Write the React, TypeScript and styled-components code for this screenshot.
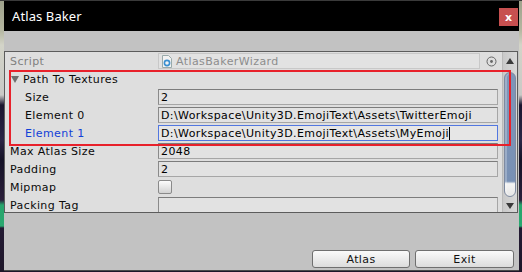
import React from "react";
import styled, { createGlobalStyle } from "styled-components";

const Global = createGlobalStyle`
  html, body { margin: 0; padding: 0; }
  body { width: 522px; height: 272px; overflow: hidden; background: #222; }
`;

const Desktop = styled.div`
  width: 522px;
  height: 272px;
  box-sizing: border-box;
  padding: 1px 3px 1px 4px;
  display: flex;
  background: linear-gradient(
    180deg,
    #3a3a3a 0px, #3a3a3a 1px,
    #9fa28c 1px, #b4b6a0 30px, #d3d4c8 45px, #c9c9c6 95px,
    #1a1630 105px, #2a2545 140px, #141226 160px, #2b1f3b 200px,
    #28a56c 205px, #2aa870 226px, #231a33 228px, #1d1629 272px
  );
  font-family: "DejaVu Sans", "Liberation Sans", sans-serif;
`;

const Window = styled.div`
  flex: 1;
  display: flex;
  flex-direction: column;
  min-width: 0;
`;

const TitleBar = styled.div`
  height: 30px;
  background: #000;
  display: flex;
  justify-content: space-between;
  align-items: flex-start;
`;

const Title = styled.span`
  color: #fff;
  font-family: "Noto Sans", "DejaVu Sans", sans-serif;
  font-size: 13px;
  line-height: 30px;
  padding-left: 8px;
  letter-spacing: 0.1px;
`;

const CloseButton = styled.div`
  width: 19px;
  height: 18px;
  margin-top: 7px;
  margin-right: 1px;
  background: #c75050;
  color: #fff;
  font-family: "DejaVu Sans", sans-serif;
  font-size: 11px;
  font-weight: bold;
  display: flex;
  align-items: center;
  justify-content: center;
  line-height: 1;
`;

const Body = styled.div`
  flex: 1;
  background: #c2c2c2;
  padding-top: 20px;
  display: flex;
  flex-direction: column;
  border-bottom: 1px solid #4a4a4a;
`;

const Panel = styled.div`
  height: 162px;
  box-sizing: border-box;
  margin-right: 1px;
  border: 1px solid #5c5c5c;
  background: #dedede;
  display: flex;
  position: relative;
  overflow: hidden;
  letter-spacing: 0.4px;
`;

const Content = styled.div`
  flex: 1;
  display: flex;
  flex-direction: column;
  min-width: 0;
`;

const Row = styled.div`
  height: 18px;
  flex: 0 0 18px;
  display: flex;
  align-items: center;
`;

const Label = styled.div<{ $indent?: number; $color?: string }>`
  width: 153px;
  flex: 0 0 153px;
  box-sizing: border-box;
  padding-left: ${(p) => p.$indent ?? 5}px;
  font-size: 11px;
  color: ${(p) => p.$color ?? "#0a0a0a"};
  white-space: nowrap;
  display: flex;
  align-items: center;
  gap: 4px;
`;

const Foldout = styled.div`
  font-size: 11px;
  color: #0a0a0a;
  padding-left: 6px;
  display: flex;
  align-items: center;
  gap: 4px;
  white-space: nowrap;
`;

const Triangle = styled.span`
  width: 0;
  height: 0;
  border-left: 4px solid transparent;
  border-right: 4px solid transparent;
  border-top: 7px solid #6d6d6d;
  margin-top: 1px;
`;

const Field = styled.div<{ $focused?: boolean; $disabled?: boolean; $gap?: number }>`
  flex: 1;
  height: 16px;
  box-sizing: border-box;
  margin-right: ${(p) => p.$gap ?? 4}px;
  border: 1px solid ${(p) => (p.$focused ? "#5277e0" : "#a6a6a6")};
  border-top-color: ${(p) => (p.$focused ? "#5277e0" : "#7c7c7c")};
  border-left-color: ${(p) => (p.$focused ? "#5277e0" : "#8a8a8a")};
  ${(p) => (p.$disabled ? "border-color: #c8c8c8;" : "")}
  background: ${(p) => (p.$focused ? "#e6e6e6" : "#e2e2e2")};
  font-size: 11px;
  color: ${(p) => (p.$disabled ? "#8d8d8d" : "#000")};
  padding-left: 2px;
  display: flex;
  align-items: center;
  white-space: nowrap;
  overflow: hidden;
  gap: 3px;
`;

const Caret = styled.span`
  width: 1px;
  height: 13px;
  background: #000;
  margin-left: -3px;
`;

const PickerSlot = styled.div`
  width: 22px;
  flex: 0 0 22px;
  display: flex;
  align-items: center;
  justify-content: center;
`;

const Checkbox = styled.div`
  width: 12px;
  height: 12px;
  border: 1px solid #8a8a8a;
  border-radius: 2px;
  background: linear-gradient(180deg, #fdfdfd, #d2d2d2);
`;

const Highlight = styled.div`
  position: absolute;
  left: 4px;
  top: 18px;
  width: 502px;
  height: 76px;
  box-sizing: border-box;
  border: 2px solid #e8212b;
  pointer-events: none;
  z-index: 2;
`;

const Scrollbar = styled.div`
  width: 14px;
  flex: 0 0 14px;
  background: linear-gradient(90deg, #c9c9c9, #d8d8d8);
  border-left: 1px solid #b9b9b9;
  display: flex;
  flex-direction: column;
  align-items: center;
`;

const ArrowUp = styled.div`
  margin-top: 6px;
  width: 0;
  height: 0;
  border-left: 4px solid transparent;
  border-right: 4px solid transparent;
  border-bottom: 6px solid #3a3a3a;
`;

const Thumb = styled.div`
  margin-top: 8px;
  width: 12px;
  height: 125px;
  border-radius: 6px;
  border: 1px solid #7e8aa0;
  box-sizing: border-box;
  background: linear-gradient(
    180deg,
    #7f95b8 0%, #7890b4 88%, #f4f4f4 90%, #e6e6e6 100%
  );
  box-shadow: inset 2px 0 0 rgba(255,255,255,0.25);
`;

const ArrowDown = styled.div`
  margin-top: 6px;
  width: 0;
  height: 0;
  border-left: 4px solid transparent;
  border-right: 4px solid transparent;
  border-top: 6px solid #3a3a3a;
`;

const Footer = styled.div`
  flex: 1;
  display: flex;
  justify-content: flex-end;
  align-items: flex-end;
  gap: 5px;
  padding: 0 5px 2px 0;
`;

const Button = styled.button<{ $w: number }>`
  width: ${(p) => p.$w}px;
  height: 18px;
  padding: 0;
  border: 1px solid #6f6f6f;
  border-radius: 3px;
  background: linear-gradient(180deg, #fafafa, #dcdcdc);
  font-family: "DejaVu Sans", "Liberation Sans", sans-serif;
  font-size: 11px;
  letter-spacing: 0.4px;
  color: #111;
`;

const ScriptIcon = () => (
  <svg width="12" height="13" viewBox="0 0 12 13">
    <path d="M1.5 0.5h6l3 3v9h-9z" fill="#f2f2f2" stroke="#9aa" />
    <circle cx="6" cy="8" r="2.6" fill="none" stroke="#3a8fd0" strokeWidth="1.6" />
  </svg>
);

const PickerIcon = () => (
  <svg width="11" height="11" viewBox="0 0 11 11">
    <circle cx="5.5" cy="5.5" r="4.5" fill="none" stroke="#666" strokeWidth="1" />
    <circle cx="5.5" cy="5.5" r="1.4" fill="#666" />
  </svg>
);

export default function App() {
  return (
    <>
      <Global />
      <Desktop>
        <Window>
          <TitleBar>
            <Title>Atlas Baker</Title>
            <CloseButton>x</CloseButton>
          </TitleBar>
          <Body>
            <Panel>
              <Content>
                <Row>
                  <Label $color="#808080">Script</Label>
                  <Field $disabled $gap={0}>
                    <ScriptIcon />
                    AtlasBakerWizard
                  </Field>
                  <PickerSlot>
                    <PickerIcon />
                  </PickerSlot>
                </Row>
                <Row>
                  <Foldout>
                    <Triangle />
                    Path To Textures
                  </Foldout>
                </Row>
                <Row>
                  <Label $indent={20}>Size</Label>
                  <Field>2</Field>
                </Row>
                <Row>
                  <Label $indent={20}>Element 0</Label>
                  <Field>D:\Workspace\Unity3D.EmojiText\Assets\TwitterEmoji</Field>
                </Row>
                <Row>
                  <Label $indent={20} $color="#1141d8">Element 1</Label>
                  <Field $focused>
                    D:\Workspace\Unity3D.EmojiText\Assets\MyEmoji
                    <Caret />
                  </Field>
                </Row>
                <Row>
                  <Label>Max Atlas Size</Label>
                  <Field>2048</Field>
                </Row>
                <Row>
                  <Label>Padding</Label>
                  <Field>2</Field>
                </Row>
                <Row>
                  <Label>Mipmap</Label>
                  <Checkbox />
                </Row>
                <Row>
                  <Label>Packing Tag</Label>
                  <Field />
                </Row>
              </Content>
              <Scrollbar>
                <ArrowUp />
                <Thumb />
                <ArrowDown />
              </Scrollbar>
              <Highlight />
            </Panel>
            <Footer>
              <Button $w={98}>Atlas</Button>
              <Button $w={99}>Exit</Button>
            </Footer>
          </Body>
        </Window>
      </Desktop>
    </>
  );
}
